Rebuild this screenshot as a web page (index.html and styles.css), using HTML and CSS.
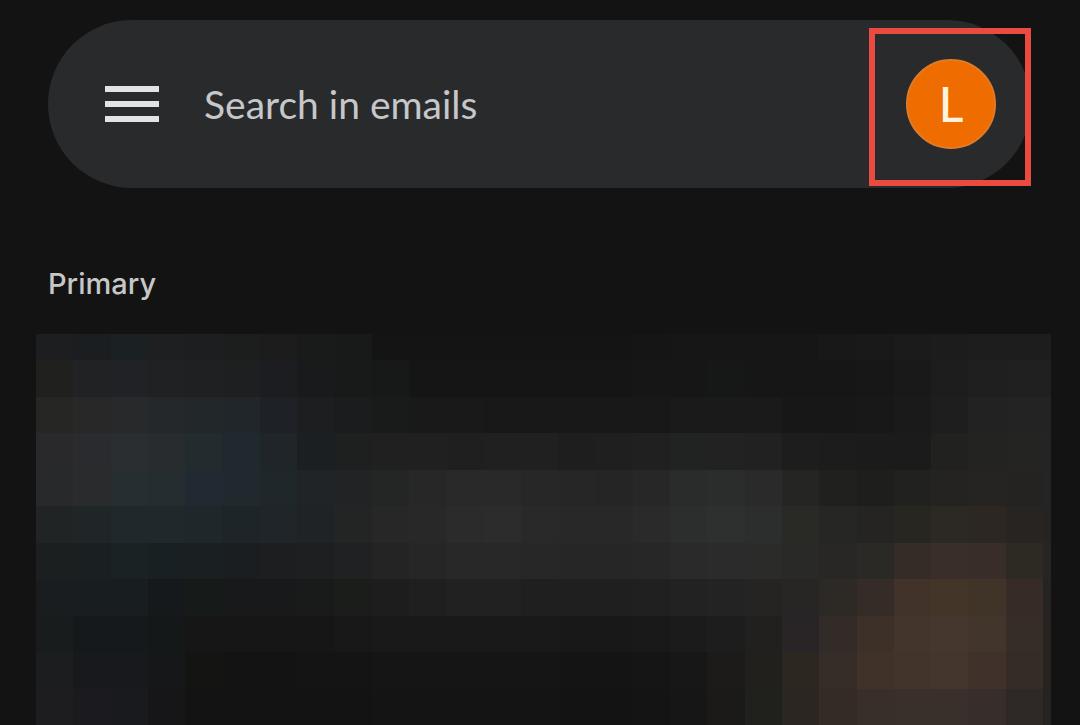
FILE: index.html
```html
<!DOCTYPE html>
<html lang="en">
<head>
  <meta charset="UTF-8" />
  <meta name="viewport" content="width=device-width, initial-scale=1" />
  <title>Primary</title>
  <link rel="stylesheet" href="styles.css">
</head>
<body>

  <!-- Search bar -->
  <header class="search-bar">
    <button type="button" class="menu-btn" aria-label="Open menu">
      <svg width="54" height="36" viewBox="0 0 54 36" fill="currentColor" aria-hidden="true">
        <path d="M0 0h54v6H0zM0 15h54v6H0zM0 30h54v6H0z" />
      </svg>
    </button>
    <input type="search" class="search-input" placeholder="Search in emails" aria-label="Search in emails" />
    <button type="button" class="avatar" aria-label="Account L">L</button>
    <div class="highlight"></div>
  </header>

  <main class="inbox">
    <h1 class="inbox-title">Primary</h1>
    <div class="mosaic" id="mosaic" aria-hidden="true"></div>
  </main>

<script src="script.js"></script>
</body>
</html>
```
FILE: styles.css
```css
* {
  box-sizing: border-box;
}
body {
  margin: 0;
  min-height: 100vh;
  display: flex;
  flex-direction: column;
  background: #131313;
  color: #c7c7c7;
  font-family: "Open Sans", "Liberation Sans", sans-serif;
}
button {
  border: none;
  padding: 0;
  cursor: pointer;
  font-family: inherit;
}
.search-bar {
  position: relative;
  display: flex;
  align-items: center;
  height: 168px;
  margin: 20px 49px 0 48px;
  padding: 0 35px 0 57px;
  border-radius: 84px;
  background: #292a2c;
}
.menu-btn {
  display: flex;
  background: none;
  color: #e3e2e6;
}
.search-input {
  flex: 1;
  min-width: 0;
  height: 60px;
  margin-left: 45px;
  padding: 0;
  border: none;
  outline: none;
  background: none;
  color: #c7c7c7;
  font-family: Lato, sans-serif;
  font-size: 39px;
}
.search-input::placeholder {
  color: #c6c7c9;
  opacity: 1;
}
.avatar {
  width: 90px;
  height: 90px;
  border: 2px solid #e27a24;
  border-radius: 50%;
  background: #ef6c00;
  color: #fff3df;
  font-family: Lato, sans-serif;
  font-size: 48px;
  font-weight: 500;
  line-height: 86px;
}
/* red frame around the account button */
.highlight {
  position: absolute;
  top: 8px;
  right: 0;
  width: 162px;
  height: 158px;
  border: 6px solid #ea4b40;
  pointer-events: none;
}
.inbox {
  flex: 1;
  display: flex;
  flex-direction: column;
  padding: 76px 29px 0 36px;
}
.inbox-title {
  margin: 0 0 30px 12px;
  font-family: Inter, sans-serif;
  font-size: 29px;
  line-height: 40px;
  font-weight: 500;
}
.mosaic {
  flex: 1;
  display: grid;
  grid-template-columns: repeat(27, 14fr) 3fr;
  grid-template-rows: 26px repeat(10, 1fr);
}
```
FILE: script.js
```js
// one row of blocks per line, one colour per block
const rows = [
  "1c1e1f 1a1e21 1b2022 1d1f20 1d1e1f 1c1d1d 1b1c1b 191b1a 181a19 141414 141414 141414 141414 141414 141414 141414 151515 161616 161616 161616 161616 181818 191919 1b1b1b 1c1c1c 1d1d1d 1d1d1d 1d1d1d",
  "20211f 212224 212225 1f2123 1e2022 1d1f21 1c1d20 191a1c 181a19 171918 151515 151515 151515 151515 151515 151515 161616 161616 161817 161616 161616 161616 171717 191919 1d1d1d 1f1f1f 202020 202020",
  "262725 282829 28292b 25282a 22272a 20262a 1e2125 1d1e20 1b1c1e 191b1a 191919 191919 181818 181818 181818 181818 181818 1a1a1a 1a1a1a 1a1a1a 171717 171717 181818 1a1a1a 1e1e1e 222222 232323 232323",
  "29292b 292b2e 2a2e30 282c2f 222b2d 20292d 1f2529 1c1f22 1e201f 1f201f 1f201f 1f1f1f 202020 202020 1e1e1e 1f1f1f 202020 212322 222222 212121 1d1d1d 1c1c1c 1b1b1b 1b1b1b 21211f 232321 242422 242424",
  "27292b 292b2d 252e30 252d30 212a32 20292d 20272b 202427 212324 242625 272727 292929 292929 272727 262626 252525 272727 2a2b2b 2b2c2c 2a2a2a 252524 20201f 1e1f1d 21211f 242321 252422 252321 252424",
  "202425 202628 1f282b 1f282a 1e2729 1e2528 1f2528 202326 222524 262726 282828 2b2b2b 2c2c2c 292929 282828 282828 2a2a2a 2c2e2d 2d302f 2c2d2d 292926 262624 252422 282620 2c2823 2c2722 282422 262422",
  "1b1f1f 1a2022 1a2224 182023 1a1f22 1b1e20 1d1e1f 1d1f20 1f2122 242424 262626 282828 282828 272727 262626 262626 272727 2a2a2a 2b2b2b 2b2b29 292927 282725 2a2925 352c28 3a2e29 382d28 2d2a23 262523",
  "191d1f 181d20 181d20 16191b 161a19 17191a 18191b 191b1a 1b1d1b 1d1d1d 1f1f1f 212121 212121 1f1f1f 1f1f1f 1f1f1f 202020 222222 232323 252422 282624 2d2924 362c27 413329 443529 403328 362b27 262422",
  "181c1d 15191c 15191c 151819 151615 151615 151615 161616 181818 191919 191919 191919 191919 191919 181818 181818 191919 1b1b1b 1d1d1d 21201f 292425 322b28 3d3028 43352c 46372e 42352c 372d28 262320",
  "1b1d1e 17191c 17191c 161719 141413 131313 131313 141414 141414 151515 151515 151515 151515 151515 141414 141414 151515 171717 1c1b19 21201d 2c2721 362c28 403229 43342b 45362d 40322a 362c27 272321",
  "1d1d1f 1b1b1f 191a1e 161618 131313 131313 131313 131313 131313 141414 141414 141414 141414 141414 131313 131313 141414 161616 1b1a18 20201d 2b2622 342b25 382e2a 392f2b 3a302b 372e2c 2e2926 272321"
];

const mosaic = document.getElementById("mosaic");
rows.forEach(row => {
  row.split(" ").forEach(color => {
    const block = document.createElement("div");
    block.style.background = "#" + color;
    mosaic.appendChild(block);
  });
});
```
